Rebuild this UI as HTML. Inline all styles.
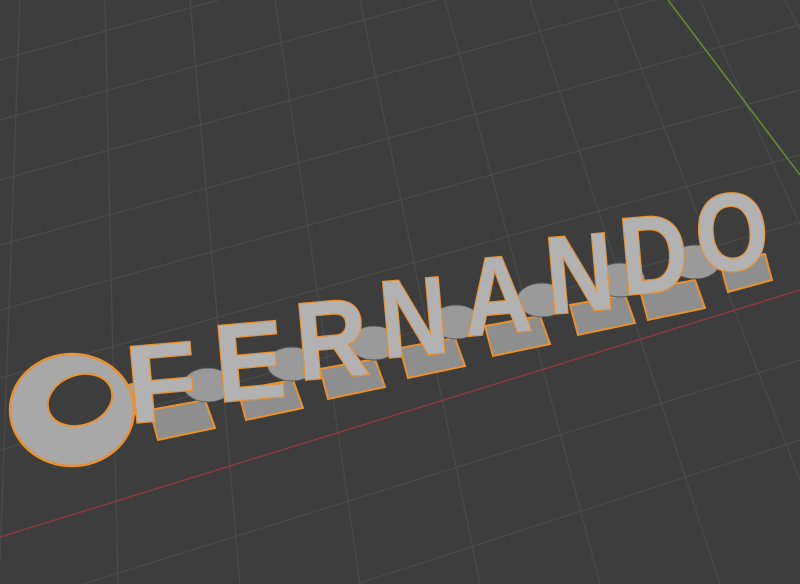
<!DOCTYPE html><html><head><style>html,body{margin:0;background:#3d3d3d;overflow:hidden;width:800px;height:584px}svg{display:block;overflow:hidden}</style></head><body>
<svg width="800" height="584" viewBox="0 0 800 584" xmlns="http://www.w3.org/2000/svg">
<rect width="800" height="584" fill="#3d3d3d"/>
<g stroke="#4a4a4a" stroke-width="1.2">
<line x1="0" y1="60" x2="800" y2="-160"/><line x1="0" y1="120" x2="800" y2="-100"/>
<line x1="0" y1="180" x2="800" y2="-40"/><line x1="0" y1="245" x2="800" y2="25"/>
<line x1="0" y1="310" x2="800" y2="90"/><line x1="0" y1="378" x2="800" y2="155"/>
<line x1="0" y1="450" x2="800" y2="222"/><line x1="0" y1="610" x2="800" y2="360"/>
<line x1="0" y1="700" x2="800" y2="440"/>
<line x1="20" y1="0" x2="0" y2="560"/><line x1="105" y1="0" x2="118" y2="584"/>
<line x1="190" y1="0" x2="240" y2="584"/><line x1="275" y1="0" x2="360" y2="584"/>
<line x1="360" y1="0" x2="480" y2="584"/><line x1="445" y1="0" x2="600" y2="584"/>
<line x1="530" y1="0" x2="720" y2="584"/><line x1="615" y1="0" x2="840" y2="584"/>
<line x1="700" y1="0" x2="960" y2="584"/><line x1="785" y1="0" x2="1080" y2="584"/>
</g>
<line x1="0" y1="537" x2="800" y2="290" stroke="#8a3a44" stroke-width="1.5"/>
<line x1="668" y1="0" x2="800" y2="175" stroke="#6a8a3a" stroke-width="1.5"/>
<rect x="110" y="385" width="40" height="30" fill="#a0a0a0" stroke="#e8912e" stroke-width="2" transform="rotate(-14 130 400)"/>
<ellipse cx="72" cy="410" rx="62" ry="56" fill="#a8a8a8" stroke="#e8912e" stroke-width="2.5"/>
<ellipse cx="80" cy="400" rx="33" ry="25" fill="#3d3d3d" stroke="#e8912e" stroke-width="2" transform="rotate(-20 80 400)"/>
<g fill="#8e8e8e" stroke="#e8912e" stroke-width="2">
<polygon points="150,410 205,400 215,428 158,440"/>
<polygon points="238,390 293,380 303,408 246,420"/>
<polygon points="320,369 375,359 385,387 328,399"/>
<polygon points="400,348 455,338 465,366 408,378"/>
<polygon points="485,326 540,316 550,344 493,356"/>
<polygon points="570,305 625,295 635,323 578,335"/>
<polygon points="640,290 695,280 705,308 648,320"/>
<polygon points="720,262 765,254 772,280 728,292"/>
</g>
<g fill="#9a9a9a" stroke="#555" stroke-width="1">
<ellipse cx="208" cy="385" rx="25" ry="17"/><ellipse cx="292" cy="364" rx="25" ry="17"/>
<ellipse cx="374" cy="343" rx="25" ry="17"/><ellipse cx="456" cy="322" rx="25" ry="17"/>
<ellipse cx="542" cy="300" rx="25" ry="17"/><ellipse cx="620" cy="280" rx="25" ry="17"/>
<ellipse cx="695" cy="262" rx="25" ry="17"/>
</g>
<g font-family="Liberation Sans, sans-serif" font-weight="bold" font-size="110" fill="#b2b2b2" stroke="#e8912e" stroke-width="2.5" paint-order="stroke" text-anchor="middle">
<text transform="translate(165,420) rotate(-5) scale(1.05,1)">F</text>
<text transform="translate(253,399) rotate(-5) scale(0.95,1)">E</text>
<text transform="translate(335,377) rotate(-5) scale(0.9,1)">R</text>
<text transform="translate(417,355) rotate(-5) scale(0.85,1)">N</text>
<text transform="translate(500,333) rotate(-5) scale(0.85,1)">A</text>
<text transform="translate(583,311) rotate(-5) scale(0.85,1)">N</text>
<text transform="translate(657,292) rotate(-5) scale(0.85,1)">D</text>
<text transform="translate(735,270) rotate(-5) scale(0.85,1)">O</text>
</g>
</svg>
</body></html>
